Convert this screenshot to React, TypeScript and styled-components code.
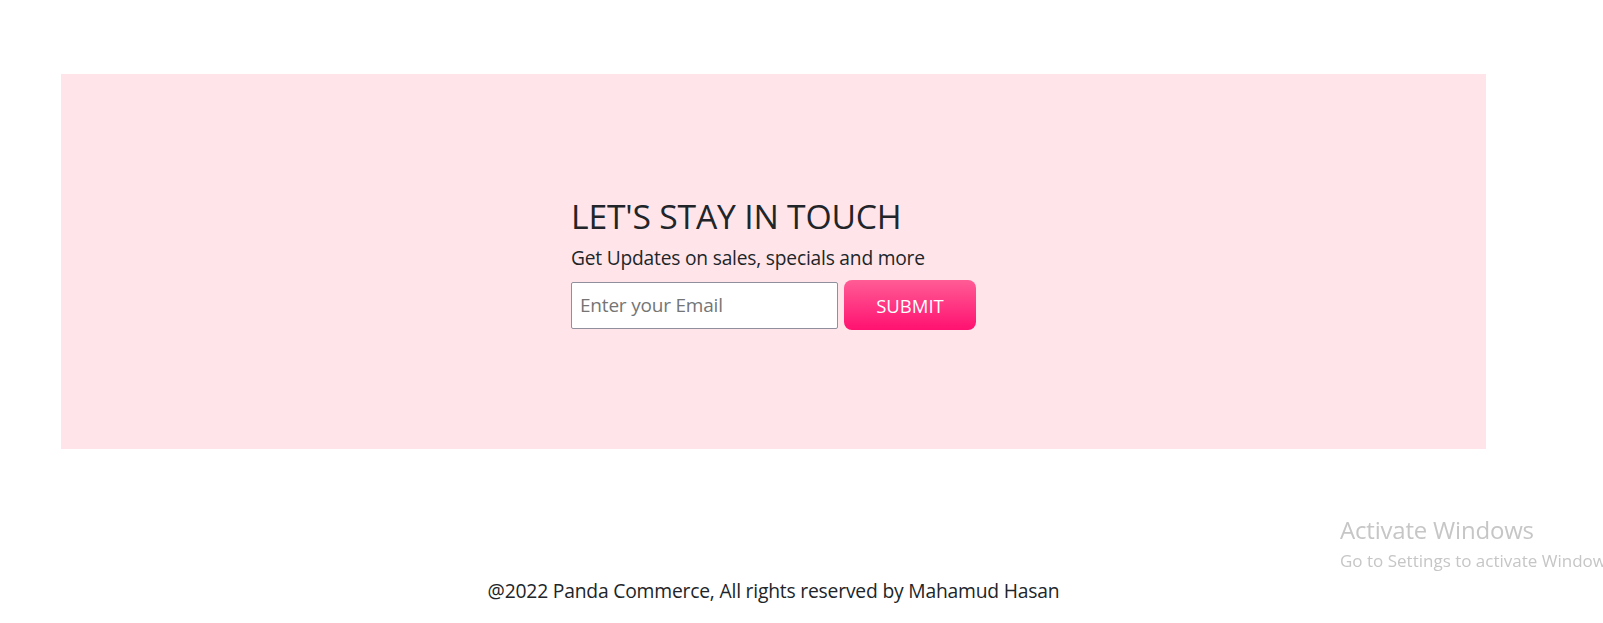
import React from "react";
import styled, { createGlobalStyle } from "styled-components";

const Global = createGlobalStyle`
  html, body { margin: 0; padding: 0; background: #ffffff; }
  body { font-family: "Open Sans", "Noto Sans", sans-serif; color: #212529; }
  * { box-sizing: border-box; }
`;

const Page = styled.div`
  width: 1603px;
  height: 623px;
  display: flex;
  flex-direction: column;
  padding-top: 74px;
  overflow: hidden;
`;

const Banner = styled.section`
  margin-left: 61px;
  width: 1425px;
  height: 375px;
  background: #ffe5ea;
  display: flex;
  align-items: center;
  justify-content: center;
`;

const Content = styled.div`
  display: flex;
  flex-direction: column;
  align-items: flex-start;
  padding-top: 3px;
`;

const Title = styled.h2`
  margin: 0 0 8px;
  font-size: 33.7px;
  font-weight: 400;
  line-height: 40px;
  color: #212529;
  letter-spacing: -0.2px;
`;

const Subtitle = styled.p`
  margin: 0 0 8px;
  font-size: 19.2px;
  line-height: 28px;
  color: #212529;
  letter-spacing: -0.2px;
`;

const Form = styled.form`
  display: flex;
  align-items: center;
  gap: 6px;
`;

const EmailInput = styled.input`
  width: 267px;
  height: 47px;
  border: 1px solid #8f8f9d;
  border-radius: 2px;
  background: #ffffff;
  padding: 0 8px;
  font-family: "Open Sans", "Noto Sans", sans-serif;
  font-size: 19px;
  color: #212529;
  outline: none;
  &::placeholder { color: #757575; letter-spacing: -0.2px; }
`;

const SubmitButton = styled.button`
  width: 132px;
  height: 50px;
  border: none;
  border-radius: 8px;
  background: linear-gradient(180deg, #ff5c95 0%, #ff1170 100%);
  color: #ffffff;
  font-family: "Open Sans", "Noto Sans", sans-serif;
  font-size: 18.5px;
  cursor: pointer;
`;

const Footer = styled.footer`
  width: 1547px;
  margin-top: 127px;
  text-align: center;
  font-size: 19.3px;
  line-height: 30px;
  color: #212529;
  letter-spacing: -0.2px;
`;

const Watermark = styled.div`
  position: fixed;
  left: 1340px;
  top: 516px;
  color: #c6c6c6;
  white-space: nowrap;
  font-family: "Open Sans", "Noto Sans", sans-serif;
  pointer-events: none;
`;

const WatermarkTitle = styled.div`
  font-size: 24px;
  line-height: 28px;
  letter-spacing: -0.2px;
`;

const WatermarkSub = styled.div`
  margin-top: 6px;
  font-size: 17px;
  line-height: 22px;
`;

export default function App() {
  return (
    <>
      <Global />
      <Page>
        <Banner>
          <Content>
            <Title>LET'S STAY IN TOUCH</Title>
            <Subtitle>Get Updates on sales, specials and more</Subtitle>
            <Form onSubmit={(e) => e.preventDefault()}>
              <EmailInput type="email" placeholder="Enter your Email" />
              <SubmitButton type="submit">SUBMIT</SubmitButton>
            </Form>
          </Content>
        </Banner>
        <Footer>@2022 Panda Commerce, All rights reserved by Mahamud Hasan</Footer>
      </Page>
      <Watermark>
        <WatermarkTitle>Activate Windows</WatermarkTitle>
        <WatermarkSub>Go to Settings to activate Windows.</WatermarkSub>
      </Watermark>
    </>
  );
}
